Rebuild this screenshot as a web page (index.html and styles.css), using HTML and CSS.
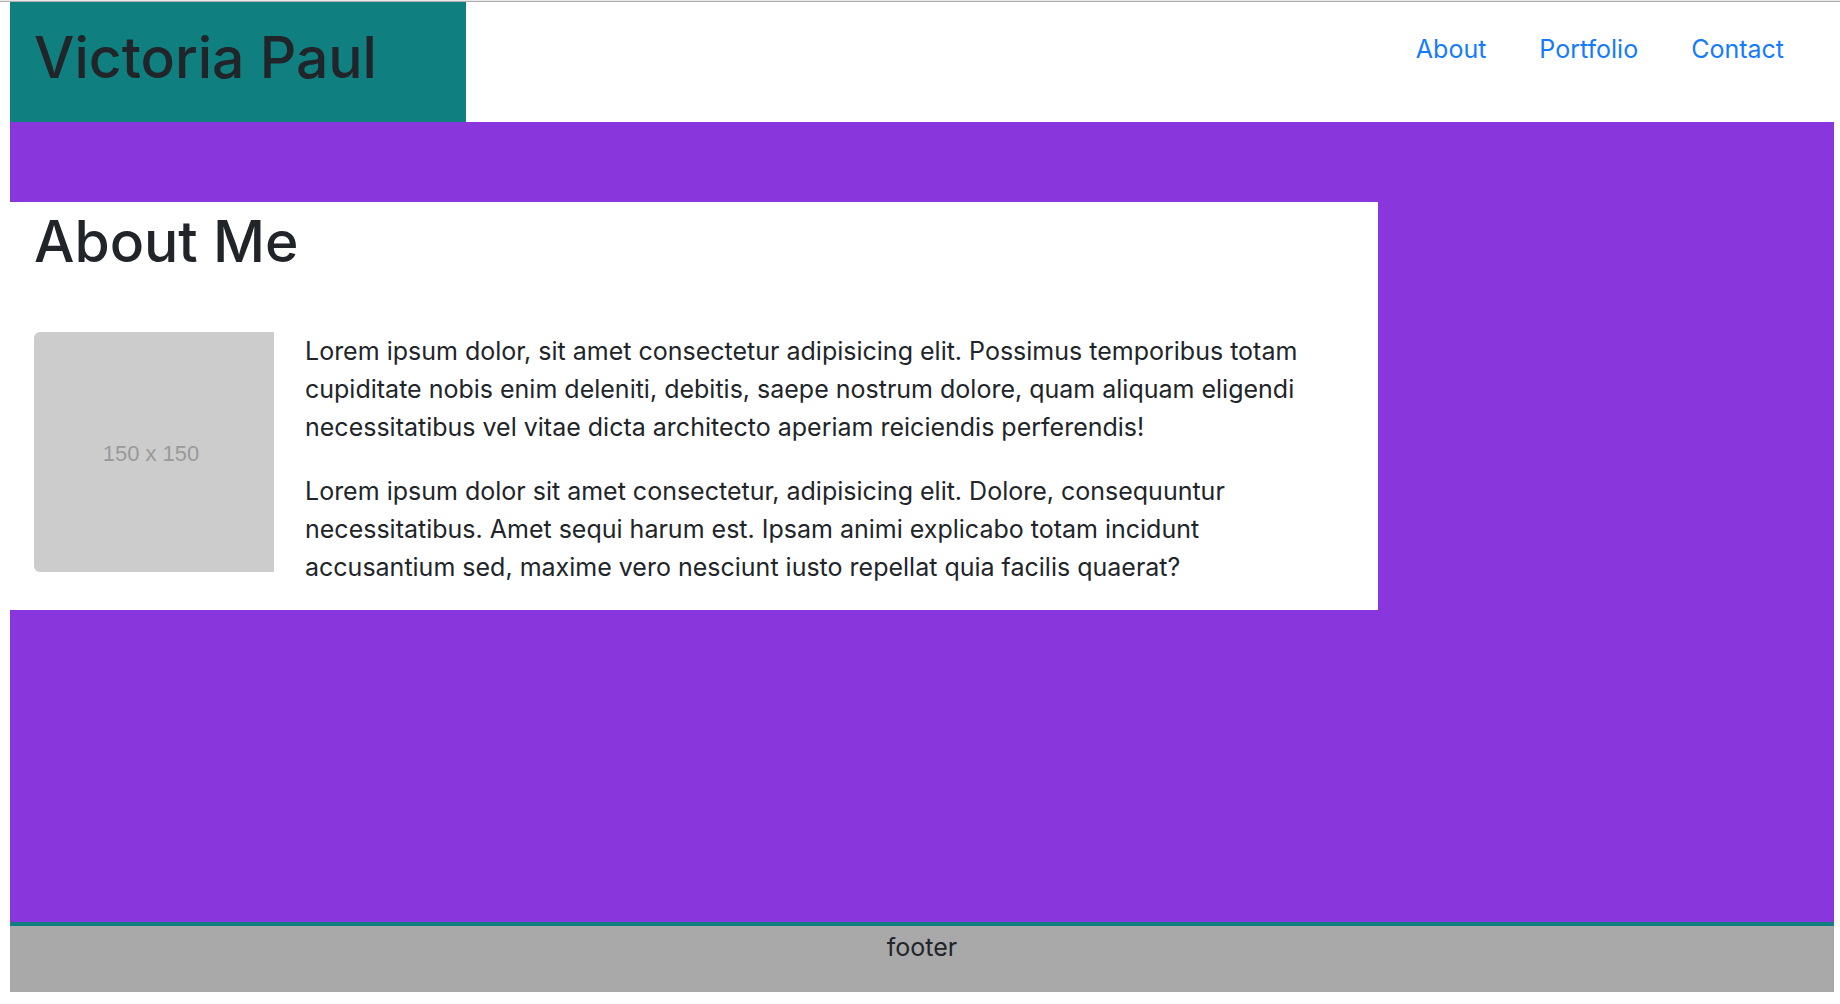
FILE: index.html
```html
<!DOCTYPE html>
<html lang="en">
<head>
  <meta charset="utf-8">
  <meta name="viewport" content="width=device-width, initial-scale=1">
  <title>Victoria Paul</title>
  <link rel="stylesheet" href="styles.css">
</head>
<body>
  <div class="page">
    <header class="header">
      <div class="brand">
        <h1 class="title">Victoria Paul</h1>
      </div>
      <nav class="nav">
        <a class="nav-link" href="#about">About</a>
        <a class="nav-link" href="#portfolio">Portfolio</a>
        <a class="nav-link" href="#contact">Contact</a>
      </nav>
    </header>
    <main class="main">
      <section class="about" id="about">
        <h2 class="title">About Me</h2>
        <div class="bio">
          <div class="photo">150 x 150</div>
          <div class="bio-text">
            <p>Lorem ipsum dolor, sit amet consectetur adipisicing elit. Possimus temporibus totam cupiditate nobis enim deleniti, debitis, saepe nostrum dolore, quam aliquam eligendi necessitatibus vel vitae dicta architecto aperiam reiciendis perferendis!</p>
            <p>Lorem ipsum dolor sit amet consectetur, adipisicing elit. Dolore, consequuntur necessitatibus. Amet sequi harum est. Ipsam animi explicabo totam incidunt accusantium sed, maxime vero nesciunt iusto repellat quia facilis quaerat?</p>
          </div>
        </div>
      </section>
    </main>
    <footer class="footer">footer</footer>
  </div>
</body>
</html>
```

FILE: styles.css
```css
* {
  box-sizing: border-box;
}

body {
  margin: 0;
  border-top: 1px solid #e8e8e8;
  background: #fff;
  color: #212529;
  font-family: Inter, "Liberation Sans", sans-serif;
  font-size: 25px;
  line-height: 38px;
}

.page {
  padding: 0 6px 12px 10px;
  border-top: 1px solid #b0b0b0;
}

.header {
  display: flex;
  justify-content: space-between;
  min-height: 120px;
}

.brand {
  width: 25%;
  padding: 18px 24px;
  background: #107f7f;
}

.title {
  margin: 0;
  font-size: 57px;
  font-weight: 500;
  line-height: 76px;
  white-space: nowrap;
}

.nav {
  display: flex;
  gap: 53px;
  padding: 28px 50px;
}

.nav-link {
  color: #147bff;
  text-decoration: none;
}

.main {
  min-height: 800px;
  padding-top: 80px;
  background: #8936dd;
}

.about {
  width: 75%;
  padding: 2px 24px 24px;
  background: #fff;
}

.bio {
  display: flex;
  gap: 31px;
  margin-top: 52px;
}

.photo {
  display: flex;
  flex: none;
  align-items: center;
  justify-content: center;
  width: 240px;
  height: 240px;
  padding: 4px 6px 0 0;
  border-radius: 6px 0 0 6px;
  background: #ccc;
  color: #999;
  font-family: "Liberation Sans", sans-serif;
  font-size: 22px;
}

.bio-text p {
  margin: 0 0 26px;
}

.bio-text p:last-child {
  margin: 0;
}

.footer {
  min-height: 70px;
  padding-top: 2px;
  border-top: 4px solid #107f7f;
  background: #a9a9a9;
  text-align: center;
}
```
